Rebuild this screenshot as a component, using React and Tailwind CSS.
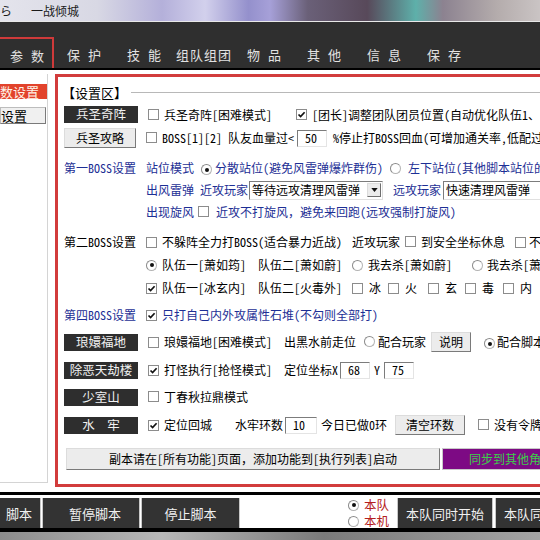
import React from 'react';

// 主窗口：参数页
const FONT = 'font-["Noto_Sans_Mono_CJK_SC","Noto_Sans_CJK_SC",sans-serif]';

function Cb({ checked }) {
  return (
    <span className="inline-flex w-[11px] h-[11px] shrink-0 items-center justify-center border border-[#8c8c8c] bg-white">
      {checked && (
        <svg viewBox="0 0 9 9" className="w-[9px] h-[9px]">
          <path d="M1.5 4.5 L3.6 6.6 L7.6 2.2" stroke="#111" strokeWidth="1.7" fill="none" />
        </svg>
      )}
    </span>
  );
}

function Radio({ checked }) {
  return (
    <span className="inline-flex w-[11px] h-[11px] shrink-0 items-center justify-center rounded-full border border-[#b4b4b4] border-t-[#8a8a8a] border-l-[#8a8a8a] bg-white">
      {checked && <span className="w-[4px] h-[4px] rounded-full bg-[#111]" />}
    </span>
  );
}

function DarkBtn({ children }) {
  return (
    <span className="flex w-[74px] h-[17px] shrink-0 items-center justify-center bg-[#2e2e2e] text-[#f2f2f2] text-[12.5px]">
      {children}
    </span>
  );
}

function LightBtn({ children, w }) {
  return (
    <span
      className={`flex ${w} h-[20px] shrink-0 items-center justify-center bg-[#ececec] border border-[#dcdcdc] border-r-[#7a7a7a] border-b-[#7a7a7a] text-black`}
    >
      {children}
    </span>
  );
}

function Field({ value, w }) {
  return (
    <span className={`flex ${w} h-[17px] shrink-0 items-center pl-[7px] bg-white border border-[#e4e4e4] border-t-[#7c7c7c] border-l-[#7c7c7c] text-black`}>
      {value}
    </span>
  );
}

function Select({ value, w }) {
  return (
    <span className={`flex ${w} h-[19px] shrink-0 items-center bg-white border border-[#e0e0e0] border-t-[#7c7c7c] border-l-[#7c7c7c] text-black`}>
      <span className="flex-1 pl-[2px] overflow-hidden">{value}</span>
      <span className="flex w-[14px] h-[14px] mr-[1px] items-center justify-center bg-[#ececec] border border-[#dcdcdc] border-r-[#6f6f6f] border-b-[#6f6f6f]">
        <svg viewBox="0 0 8 5" className="w-[7px] h-[4px]">
          <path d="M0 0 H8 L4 5 Z" fill="#111" />
        </svg>
      </span>
    </span>
  );
}

const row = 'flex items-center whitespace-nowrap';

const tabs = ['保护', '技能', '组队组团', '物品', '其他', '信息', '保存'];

export default function App() {
  return (
    <div className={`w-[540px] h-[540px] overflow-hidden bg-white flex flex-col text-[12px] leading-none text-black ${FONT}`}>
      {/* 顶部模糊背景 */}
      <div className="h-[22px] shrink-0 flex items-center border-b border-[#e8e8e8] bg-[linear-gradient(90deg,#e4e4ec_0%,#d8d8e4_18%,#b4b0da_30%,#d2d0ec_38%,#9490cc_46%,#a6a0d8_50%,#6a6078_57%,#58495a_68%,#5eb0aa_77%,#8c8290_82%,#b4acac_92%,#cac4c4_100%)]">
        <span className="text-[#1a1a1a] text-[12px]">ら</span>
        <span className="ml-[19px] text-[#1a1a1a] text-[12px]">一战倾城</span>
      </div>

      {/* 标签栏 */}
      <div className="h-[48px] shrink-0 flex items-end bg-[#2f2f2f] border-b-2 border-black text-[13px] text-[#e2e2e2] whitespace-nowrap">
        <span className="flex w-[54px] h-[31px] shrink-0 items-center justify-center pl-[10px] pt-[3px] tracking-[8px] border-t-2 border-r-2 border-[#cf3a3a]">
          参数
        </span>
        {tabs.map((t) => (
          <span
            key={t}
            className={`flex w-[60px] h-[31px] shrink-0 items-center justify-center pt-[3px] first:ml-[3px] ${t.length === 2 ? 'tracking-[8px] pl-[8px]' : 'tracking-[1px]'}`}
          >
            {t}
          </span>
        ))}
      </div>

      {/* 主体 */}
      <div className="h-[420px] shrink-0 flex pt-[4px]">
        <div className="w-[48px] h-[409px] shrink-0 border-r border-b border-[#d4d4d4] pt-[10px] overflow-hidden">
          <div className="h-[15px] w-[47px] bg-[#e2432c] text-[#fff4e8] flex items-center text-[13px] overflow-hidden whitespace-nowrap">
            <span className="-ml-[13px]">参数设置</span>
          </div>
          <div className="mt-[8px] h-[17px] w-[46px] bg-[#f0f0f0] border border-[#bdbdbd] border-r-[#7a7a7a] border-b-[#7a7a7a] flex items-center text-[13px]">
            设置
          </div>
        </div>

        <div className="ml-[7px] w-[560px] h-[413px] shrink-0 border-[3px] border-r-0 border-[#d23c3c] pt-[5px] pl-[6px]">
          {/* 设置区 */}
          <div className={`${row} h-[20px] -ml-[2px]`}>
            <span className="text-[13px]">【设置区】</span>
            <span className="ml-[4px] flex-1 h-px bg-[#b8b8b8]" />
          </div>

          <div className={`${row} mt-[1px] h-[23px]`}>
            <DarkBtn>兵圣奇阵</DarkBtn>
            <span className="ml-[10px] w-[148px] flex items-center">
              <Cb />
              <span className="ml-[5px]">兵圣奇阵[困难模式]</span>
            </span>
            <Cb checked />
            <span className="ml-[5px]">[团长]调整团队团员位置(自动优化队伍1、队伍2)</span>
          </div>

          <div className={`${row} h-[24px]`}>
            <LightBtn w="w-[72px]">兵圣攻略</LightBtn>
            <span className="ml-[10px]"><Cb /></span>
            <span className="ml-[5px]">BOSS[1][2] 队友血量过&lt;</span>
            <span className="ml-[3px]"><Field value="50" w="w-[30px]" /></span>
            <span className="ml-[6px]">%停止打BOSS回血(可增加通关率,低配过滤)</span>
          </div>

          <div className={`${row} mt-[7px] h-[22px] text-[#1d2f95]`}>
            <span className="w-[82px] shrink-0">第一BOSS设置</span>
            <span>站位模式</span>
            <span className="ml-[7px]"><Radio checked /></span>
            <span className="ml-[3px] w-[175px]">分散站位(避免风雷弹爆炸群伤)</span>
            <Radio />
            <span className="ml-[7px]">左下站位(其他脚本站位的)</span>
          </div>

          <div className={`${row} h-[22px] text-[#1d2f95]`}>
            <span className="w-[82px] shrink-0" />
            <span>出风雷弹 近攻玩家</span>
            <span className="ml-[1px]"><Select value="等待远攻清理风雷弹" w="w-[134px]" /></span>
            <span className="ml-[10px]">远攻玩家</span>
            <span className="ml-[2px]"><Select value="快速清理风雷弹" w="w-[130px]" /></span>
          </div>

          <div className={`${row} h-[22px] text-[#1d2f95]`}>
            <span className="w-[82px] shrink-0" />
            <span>出现旋风</span>
            <span className="ml-[4px]"><Cb /></span>
            <span className="ml-[7px]">近攻不打旋风，避免来回跑(远攻强制打旋风)</span>
          </div>

          <div className={`${row} mt-[8px] h-[22px]`}>
            <span className="w-[82px] shrink-0">第二BOSS设置</span>
            <span className="w-[206px] flex items-center">
              <Cb />
              <span className="ml-[5px]">不躲阵全力打BOSS(适合暴力近战)</span>
            </span>
            <span>近攻玩家</span>
            <span className="ml-[5px]"><Cb /></span>
            <span className="ml-[5px] w-[94px]">到安全坐标休息</span>
            <Cb />
            <span className="ml-[3px]">不打</span>
          </div>

          <div className={`${row} mt-[1px] h-[22px]`}>
            <span className="w-[82px] shrink-0" />
            <span className="w-[112px] flex items-center">
              <Radio checked />
              <span className="ml-[5px]">队伍一[萧如筠]</span>
            </span>
            <span className="w-[94px]">队伍二[萧如蔚]</span>
            <span className="w-[120px] flex items-center">
              <Radio />
              <span className="ml-[5px]">我去杀[萧如蔚]</span>
            </span>
            <Radio />
            <span className="ml-[4px]">我去杀[萧如筠]</span>
          </div>

          <div className={`${row} mt-[1px] h-[22px]`}>
            <span className="w-[82px] shrink-0" />
            <span className="w-[112px] flex items-center">
              <Cb checked />
              <span className="ml-[5px]">队伍一[冰玄内]</span>
            </span>
            <span className="w-[94px]">队伍二[火毒外]</span>
            {[['冰', 'w-[36px]'], ['火', 'w-[40px]'], ['玄', 'w-[37px]'], ['毒', 'w-[38px]'], ['内', 'w-[38px]']].map(([t, w]) => (
              <span key={t} className={`${w} flex items-center`}>
                <Cb />
                <span className="ml-[6px]">{t}</span>
              </span>
            ))}
          </div>

          <div className={`${row} mt-[5px] h-[22px] text-[#1d2f95]`}>
            <span className="w-[82px] shrink-0">第四BOSS设置</span>
            <Cb checked />
            <span className="ml-[5px]">只打自己内外攻属性石堆(不勾则全部打)</span>
          </div>

          <div className={`${row} mt-[5px] h-[22px]`}>
            <DarkBtn>琅嬛福地</DarkBtn>
            <span className="ml-[10px] w-[136px] flex items-center">
              <Cb />
              <span className="ml-[5px]">琅嬛福地[困难模式]</span>
            </span>
            <span>出黑水前走位</span>
            <span className="ml-[8px]"><Radio /></span>
            <span className="ml-[3px]">配合玩家</span>
            <span className="ml-[5px]"><LightBtn w="w-[40px]">说明</LightBtn></span>
            <span className="ml-[13px]"><Radio checked /></span>
            <span className="ml-[2px]">配合脚本</span>
          </div>

          <div className={`${row} mt-[6px] h-[22px]`}>
            <DarkBtn>除恶天劫楼</DarkBtn>
            <span className="ml-[10px] w-[136px] flex items-center">
              <Cb checked />
              <span className="ml-[5px]">打怪执行[抢怪模式]</span>
            </span>
            <span>定位坐标X</span>
            <span className="ml-[2px]"><Field value="68" w="w-[30px]" /></span>
            <span className="ml-[4px]">Y</span>
            <span className="ml-[4px]"><Field value="75" w="w-[30px]" /></span>
          </div>

          <div className={`${row} mt-[5px] h-[22px]`}>
            <DarkBtn>少室山</DarkBtn>
            <span className="ml-[10px]"><Cb /></span>
            <span className="ml-[5px]">丁春秋拉鼎模式</span>
          </div>

          <div className={`${row} mt-[6px] h-[22px]`}>
            <DarkBtn>水　牢</DarkBtn>
            <span className="ml-[10px] w-[87px] flex items-center">
              <Cb checked />
              <span className="ml-[5px]">定位回城</span>
            </span>
            <span>水牢环数</span>
            <span className="ml-[2px]"><Field value="10" w="w-[32px]" /></span>
            <span className="ml-[4px]">今日已做0环</span>
            <span className="ml-[8px]"><LightBtn w="w-[70px]">清空环数</LightBtn></span>
            <span className="ml-[13px]"><Cb /></span>
            <span className="ml-[5px]">没有令牌离开</span>
          </div>

          <div className={`${row} mt-[12px] h-[22px] pl-[2px]`}>
            <span className="flex w-[374px] h-[22px] items-center justify-center bg-[#ececec] border border-[#dcdcdc] border-r-[#7a7a7a] border-b-[#7a7a7a]">
              副本请在[所有功能]页面，添加功能到[执行列表]启动
            </span>
            <span className="ml-[2px] flex w-[110px] h-[22px] items-center pl-[26px] bg-[#7d0a84] border border-[#c9c9c9] text-[#3ccf4a]">
              同步到其他角色
            </span>
          </div>
        </div>
      </div>

      {/* 底部按钮 */}
      <div className="mt-[2px] h-[3px] shrink-0 bg-black" />
      <div className="mt-[3px] h-[30px] shrink-0 flex items-stretch text-[13px] whitespace-nowrap">
        <span className="flex w-[41px] shrink-0 items-center justify-end pr-[8px] bg-[#333] text-[#f0f0f0] border-r border-[#c8c8c8] overflow-hidden">
          脚本
        </span>
        <span className="ml-[1px] flex w-[98px] shrink-0 items-center justify-center pl-[8px] bg-[#333] text-[#f0f0f0] border-x border-[#c8c8c8]">
          暂停脚本
        </span>
        <span className="ml-[1px] flex w-[99px] shrink-0 items-center justify-center bg-[#333] text-[#f0f0f0] border-x border-[#c8c8c8]">
          停止脚本
        </span>
        <span className="ml-[108px] w-[48px] shrink-0 flex flex-col justify-center gap-[3px] text-[12.5px] text-[#b42020]">
          <span className="flex h-[13px] items-center"><Radio checked /><span className="ml-[5px]">本队</span></span>
          <span className="flex h-[13px] items-center"><Radio /><span className="ml-[5px]">本机</span></span>
        </span>
        <span className="ml-[1px] flex w-[96px] shrink-0 items-center justify-center bg-[#333] text-[#f0f0f0] border-x border-[#c8c8c8]">
          本队同时开始
        </span>
        <span className="ml-[2px] flex w-[96px] shrink-0 items-center justify-center bg-[#333] text-[#f0f0f0] border-x border-[#c8c8c8]">
          本队同时停止
        </span>
      </div>
      <div className="h-[4px] shrink-0 bg-black" />
      <div className="flex-1 bg-[linear-gradient(90deg,#8c8c8c,#b8b8b8_30%,#7a7a7a_60%,#a4a4a4)]" />
    </div>
  );
}
